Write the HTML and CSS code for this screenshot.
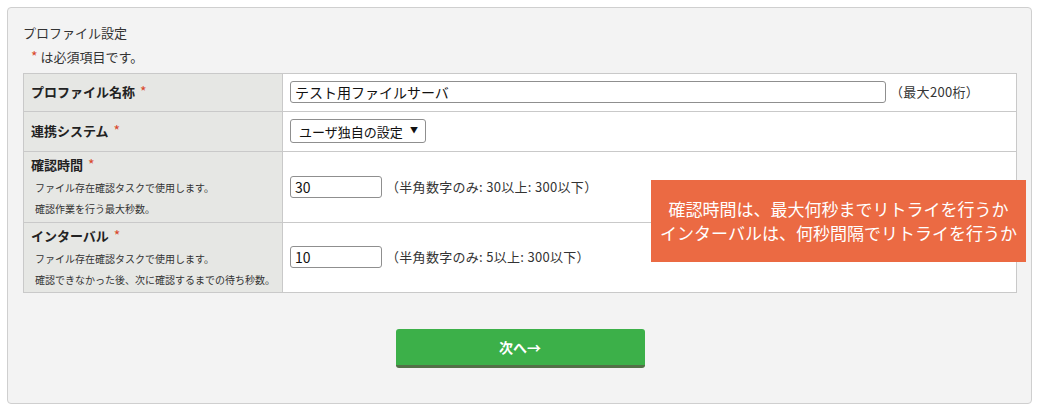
FILE: index.html
```html
<!DOCTYPE html>
<html lang="ja">
<head>
<meta charset="UTF-8" />
<title>プロファイル設定</title>
<link rel="stylesheet" href="styles.css">
</head>
<body>

  <div class="panel">
    <div class="panel-title">プロファイル設定</div>
    <div class="req-note"><span class="req">*</span> は必須項目です。</div>

    <table class="form-table">
      <tr>
        <th>プロファイル名称 <span class="req">*</span></th>
        <td>
          <div class="field">
            <input class="txt txt-wide" type="text" value="テスト用ファイルサーバ" />
            <span class="hint">（最大200桁）</span>
          </div>
        </td>
      </tr>
      <tr>
        <th>連携システム <span class="req">*</span></th>
        <td>
          <div class="field">
            <span class="select-wrap">
              <select class="sel">
                <option>ユーザ独自の設定</option>
              </select>
            </span>
          </div>
        </td>
      </tr>
      <tr class="row-tall row-time">
        <th>
          <div class="label-main">確認時間 <span class="req">*</span></div>
          <div class="label-sub">ファイル存在確認タスクで使用します。<br />確認作業を行う最大秒数。</div>
        </th>
        <td>
          <div class="field">
            <input class="txt txt-num" type="text" value="30" />
            <span class="hint">（半角数字のみ: 30以上: 300以下）</span>
          </div>
        </td>
      </tr>
      <tr class="row-tall">
        <th>
          <div class="label-main">インターバル <span class="req">*</span></div>
          <div class="label-sub">ファイル存在確認タスクで使用します。<br />確認できなかった後、次に確認するまでの待ち秒数。</div>
        </th>
        <td>
          <div class="field">
            <input class="txt txt-num" type="text" value="10" />
            <span class="hint">（半角数字のみ: 5以上: 300以下）</span>
          </div>
        </td>
      </tr>
    </table>

    <div class="actions">
      <button class="btn-next" type="button">次へ→</button>
    </div>

    <!-- annotation over the form -->
    <div class="callout">
      確認時間は、最大何秒までリトライを行うか<br />
      インターバルは、何秒間隔でリトライを行うか
    </div>
  </div>

</body>
</html>
```

FILE: styles.css
```css
html, body {
  margin: 0;
  padding: 0;
  background: #fff;
  font-family: "Noto Sans CJK JP", "Noto Sans", sans-serif;
  font-size: 13px;
  color: #333;
}

.panel {
  position: relative;
  margin: 7px 0 0 7px;
  width: 1025px;
  box-sizing: border-box;
  border: 1px solid #cfcfcf;
  border-radius: 4px;
  background: #f3f3f3;
  padding: 15px 14px 35px 15px;
}

.panel-title {
  line-height: 20px;
  color: #333;
}

.req-note {
  margin: 4px 0 6px 6px;
  height: 20px;
  line-height: 20px;
}

.req {
  margin-left: 2px;
  color: #d9482b;
  font-size: 14px;
  line-height: 1;
  font-weight: normal;
}

.form-table {
  width: 994px;
  border-collapse: collapse;
  background: #fff;
}

.form-table th,
.form-table td {
  border: 1px solid #c9c9c9;
  padding: 7px 7px 8px;
  text-align: left;
  line-height: 22px;
}

.form-table th {
  width: 243px;
  background: #e6e7e4;
  font-weight: bold;
  color: #222;
}

.form-table td {
  vertical-align: middle;
  white-space: nowrap;
}

.row-tall th {
  vertical-align: top;
  padding: 3px 7px 2px 7px;
}

.row-time th {
  padding-bottom: 3px;
}

.label-main {
  height: 20px;
  line-height: 20px;
}

.label-sub {
  margin-top: 2px;
  padding-left: 4px;
  font-size: 10px;
  font-weight: normal;
  line-height: 21px;
  white-space: nowrap;
  color: #333;
}

.field {
  display: flex;
  align-items: center;
  gap: 4px;
}

.txt {
  box-sizing: border-box;
  height: 22px;
  border: 1px solid #8f8f8f;
  border-radius: 3px;
  padding: 0 4px;
  font-family: inherit;
  font-size: 14px;
  color: #111;
  background: #fff;
}

.txt-wide { width: 596px; }
.txt-num { width: 92px; }

.hint {
  letter-spacing: 0.3px;
  color: #333;
}

.select-wrap {
  position: relative;
  display: block;
  height: 24px;
}

.sel {
  appearance: none;
  -webkit-appearance: none;
  display: block;
  box-sizing: border-box;
  width: 136px;
  height: 24px;
  border: 1px solid #8f8f8f;
  border-radius: 3px;
  background: #fff;
  padding: 0 20px 0 8px;
  font-family: inherit;
  font-size: 13px;
  color: #111;
}

.select-wrap::after {
  content: "▼";
  position: absolute;
  right: 8px;
  top: 0;
  font-size: 8px;
  line-height: 22px;
  color: #111;
  pointer-events: none;
}

.actions {
  display: flex;
  justify-content: center;
  margin-top: 36px;
}

.btn-next {
  width: 249px;
  height: 39px;
  border: none;
  border-bottom: 3px solid #527047;
  border-radius: 3px;
  background: #3cb049;
  color: #fff;
  font-family: inherit;
  font-size: 14px;
  font-weight: bold;
  cursor: pointer;
}

.callout {
  position: absolute;
  left: 643px;
  top: 172px;
  width: 375px;
  height: 82px;
  box-sizing: border-box;
  padding-top: 17px;
  background: #eb6a43;
  color: #fff;
  font-size: 17px;
  line-height: 24px;
  text-align: center;
  white-space: nowrap;
}
```
